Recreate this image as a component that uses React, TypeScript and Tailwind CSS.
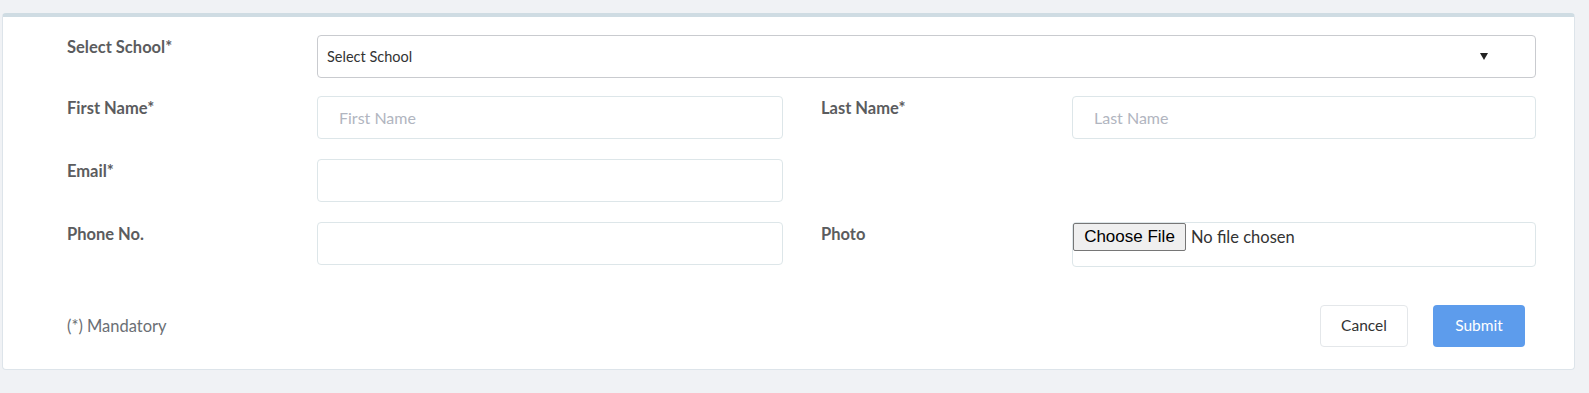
import { ReactNode } from 'react'

const FONT = { fontFamily: 'Lato, "Open Sans", sans-serif' }

function Label({ children, className = '' }: { children: ReactNode; className?: string }) {
  return (
    <label className={`block pt-[2px] text-[16.5px] font-bold text-[#5b5c5e] leading-5 ${className}`}>
      {children}
    </label>
  )
}

function TextInput({ placeholder = '' }: { placeholder?: string }) {
  return (
    <input
      type="text"
      placeholder={placeholder}
      className="h-[43px] w-full rounded-[4px] border border-[#dde6e9] bg-white px-[21px] text-[16px] text-[#333] placeholder:text-[#b1b5c0] outline-none"
    />
  )
}

export default function App() {
  return (
    <div className="min-h-[393px] w-full bg-[#f0f2f5] pt-[13px] pl-[2px] pr-[14px]" style={FONT}>
      <div className="rounded-[4px] border border-t-4 border-[#dde4ea] border-t-[#cfdce3] bg-white pl-[64px] pr-[38px] pt-[18px] pb-[22px]">
        <form className="grid grid-cols-[250px_466px_38px_251px_464px] gap-y-[18px]">
          {/* School */}
          <Label>Select School*</Label>
          <div className="relative col-span-4 flex h-[43px] items-center rounded-[4px] border border-[#c9cbcf] bg-white pl-[9px]">
            <span className="text-[14.5px] text-[#333]">Select School</span>
            <span className="absolute right-[47px] top-[17px] h-0 w-0 border-x-[4px] border-t-[7px] border-x-transparent border-t-[#222]" />
          </div>

          {/* Names */}
          <Label>First Name*</Label>
          <TextInput placeholder="First Name" />
          <div />
          <Label>Last Name*</Label>
          <TextInput placeholder="Last Name" />

          {/* Email */}
          <Label className="mt-[2px]">Email*</Label>
          <div className="mt-[2px]">
            <TextInput />
          </div>
          <div className="col-span-3" />

          {/* Phone / photo */}
          <Label className="mt-[2px]">Phone No.</Label>
          <div className="mt-[2px]">
            <TextInput />
          </div>
          <div />
          <Label className="mt-[2px]">Photo</Label>
          <div className="mt-[2px] flex h-[45px] items-start rounded-[4px] border border-[#dde6e9] bg-white">
            <button
              type="button"
              className="h-[28px] w-[113px] rounded-[2px] border border-[#767676] bg-[#efefef] text-[17px] text-black"
              style={{ fontFamily: '"Liberation Sans", Arial, sans-serif' }}
            >
              Choose File
            </button>
            <span className="ml-[5px] pt-[2px] text-[16.5px] text-[#333]">No file chosen</span>
          </div>
        </form>

        {/* Footer */}
        <div className="mt-[38px] flex items-center justify-between pr-[11px]">
          <span className="text-[16.5px] text-[#6b6f75]">(*) Mandatory</span>
          <div className="flex gap-[25px]">
            <button
              type="button"
              className="h-[42px] w-[88px] rounded-[4px] border border-[#e4e7ea] bg-white text-[15.5px] text-[#333]"
            >
              Cancel
            </button>
            <button
              type="button"
              className="h-[42px] w-[92px] rounded-[4px] bg-[#5d9cec] text-[15.5px] text-white"
            >
              Submit
            </button>
          </div>
        </div>
      </div>
    </div>
  )
}
